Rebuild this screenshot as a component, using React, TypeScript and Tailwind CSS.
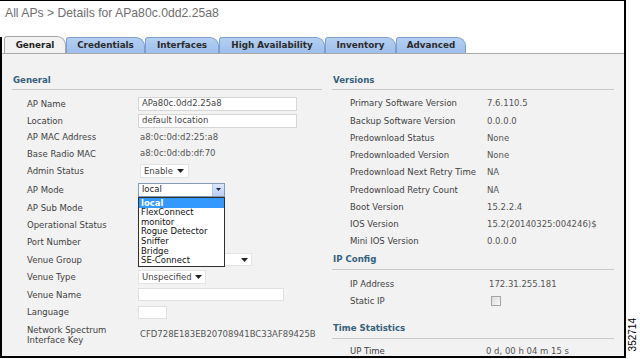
import React from 'react';

// AP details page (General tab) with the AP Mode list dropped open

const sans = "font-['DejaVu_Sans',Verdana,sans-serif]";

const tabs = [
  { name: 'Credentials', w: 'w-[79px]' },
  { name: 'Interfaces', w: 'w-[74px]' },
  { name: 'High Availability', w: 'w-[106px]' },
  { name: 'Inventory', w: 'w-[71px]' },
  { name: 'Advanced', w: 'w-[70px]' },
];

const apModes = ['local', 'FlexConnect', 'monitor', 'Rogue Detector', 'Sniffer', 'Bridge', 'SE-Connect'];

const versions = [
  ['Primary Software Version', '7.6.110.5'],
  ['Backup Software Version', '0.0.0.0'],
  ['Predownload Status', 'None'],
  ['Predownloaded Version', 'None'],
  ['Predownload Next Retry Time', 'NA'],
  ['Predownload Retry Count', 'NA'],
  ['Boot Version', '15.2.2.4'],
  ['IOS Version', '15.2(20140325:004246)$'],
  ['Mini IOS Version', '0.0.0.0'],
];

function Caret() {
  return (
    <svg width="7" height="4" viewBox="0 0 7 4" className="shrink-0">
      <path d="M0 0h7L3.5 4z" fill="#222" />
    </svg>
  );
}

function SectionHeader({ title, h = 'h-[19px]' }: { title: string; h?: string }) {
  return (
    <div className={`flex ${h} items-center border-b border-[#c9c9c9] pl-[1px] text-[8.6px] font-bold text-[#34617d]`}>
      {title}
    </div>
  );
}

interface RowProps {
  label: React.ReactNode;
  h: string;
  children?: React.ReactNode;
}

const LeftRow: React.FC<RowProps> = ({ label, h, children }) => (
  <div className={`flex items-center ${h}`}>
    <div className="w-[111px] shrink-0 leading-[10px] text-[#3f3f3f]">{label}</div>
    {children}
  </div>
);

const RightRow: React.FC<RowProps> = ({ label, h, children }) => (
  <div className={`flex items-center ${h}`}>
    <div className="w-[137px] shrink-0 text-[#3f3f3f]">{label}</div>
    <div className="text-[#555]">{children}</div>
  </div>
);

export default function App() {
  return (
    <div className={`flex h-[359px] w-[640px] overflow-hidden bg-white ${sans} text-[8.5px] leading-none`}>
      <div className="flex h-[358px] w-[626px] shrink-0 flex-col overflow-hidden border-t border-r-2 border-b-2 border-black">
        {/* breadcrumb title */}
        <div className="flex h-[25px] shrink-0 items-center pl-[5px] font-['Liberation_Sans',Arial,sans-serif] text-[12.2px] text-[#6e6e6e]">
          All APs &gt; Details for APa80c.0dd2.25a8
        </div>

        <div className="mt-[11px] flex min-h-0 flex-1 flex-col border-l-2 border-black">
          {/* tab strip */}
          <div className="flex h-[17px] shrink-0 items-end border-b border-[#a9a9a9] pl-[2px]">
            <div className="flex h-[17px] w-[62px] items-center justify-center rounded-tl-[3px] rounded-tr-[9px] border border-b-0 border-[#a5a5a5] bg-[#f2f2f2] text-[8.8px] font-bold text-[#222]">
              General
            </div>
            {tabs.map((t) => (
              <div
                key={t.name}
                className={`flex h-[16px] ${t.w} items-center justify-center rounded-tl-[3px] rounded-tr-[9px] border border-b-0 border-[#7d9fc9] bg-gradient-to-b from-[#b3cff2] to-[#9fc0eb] text-[8.8px] font-bold text-[#2b2b2b]`}
              >
                {t.name}
              </div>
            ))}
          </div>

          {/* panel */}
          <div className="flex min-h-0 flex-1 gap-[10px] overflow-hidden bg-[#f2f2f2] pl-[10px] pt-[17px]">
            {/* left column */}
            <div className="w-[310px] shrink-0">
              <SectionHeader title="General" />
              <div className="mt-[5px] pl-[15px]">
                <LeftRow label="AP Name" h="h-[17px]">
                  <div className="flex h-[14px] w-[159px] items-center border border-[#d6d6d6] bg-white pl-[3px] text-[#444]">
                    APa80c.0dd2.25a8
                  </div>
                </LeftRow>
                <LeftRow label="Location" h="h-[17px]">
                  <div className="flex h-[14px] w-[159px] items-center border border-[#d6d6d6] bg-white pl-[3px] text-[#444]">
                    default location
                  </div>
                </LeftRow>
                <LeftRow label="AP MAC Address" h="h-[16px]">
                  <span className="pl-[2px] text-[#555]">a8:0c:0d:d2:25:a8</span>
                </LeftRow>
                <LeftRow label="Base Radio MAC" h="h-[17px]">
                  <span className="pl-[2px] text-[#555]">a8:0c:0d:db:df:70</span>
                </LeftRow>
                <LeftRow label="Admin Status" h="h-[18px]">
                  <div className="ml-[2px] flex h-[14px] w-[49px] items-center justify-between border border-[#e4e4e4] bg-white pl-[3px] pr-[4px] text-[#444]">
                    Enable
                    <Caret />
                  </div>
                </LeftRow>
                <LeftRow label="AP Mode" h="h-[19px]">
                  <div className="relative z-10">
                    <div className="flex h-[14px] w-[87px] items-center justify-between border border-[#7f9db9] bg-white pl-[3px] text-[#222]">
                      local
                      <div className="flex h-[12px] w-[12px] items-center justify-center border-l border-[#b4c8ea] bg-gradient-to-b from-[#dbe6fb] to-[#bccff3]">
                        <svg width="5" height="3" viewBox="0 0 5 3">
                          <path d="M0 0h5L2.5 3z" fill="#1d2a4a" />
                        </svg>
                      </div>
                    </div>
                    <div className="absolute left-0 top-full w-[87px] border border-[#2f2f2f] bg-white py-[0.5px] text-[8.5px] text-[#111]">
                      {apModes.map((m, i) => (
                        <div
                          key={m}
                          className={`flex h-[9.6px] items-center pl-[2px] ${i === 0 ? 'bg-[#3399ff] font-bold text-white' : ''}`}
                        >
                          {m}
                        </div>
                      ))}
                    </div>
                  </div>
                </LeftRow>
                <LeftRow label="AP Sub Mode" h="h-[17px]" />
                <LeftRow label="Operational Status" h="h-[17px]" />
                <LeftRow label="Port Number" h="h-[18px]" />
                <LeftRow label="Venue Group" h="h-[17px]">
                  <div className="flex h-[13px] w-[114px] items-center justify-end border border-[#e4e4e4] bg-white pr-[3px]">
                    <Caret />
                  </div>
                </LeftRow>
                <LeftRow label="Venue Type" h="h-[18px]">
                  <div className="flex h-[14px] w-[68px] items-center justify-between border border-[#e4e4e4] bg-white pl-[3px] pr-[3px] text-[#444]">
                    Unspecified
                    <Caret />
                  </div>
                </LeftRow>
                <LeftRow label="Venue Name" h="h-[17px]">
                  <div className="h-[13px] w-[146px] border border-[#e0e0e0] bg-white" />
                </LeftRow>
                <LeftRow label="Language" h="h-[18px]">
                  <div className="h-[13px] w-[29px] border border-[#e0e0e0] bg-white" />
                </LeftRow>
                <LeftRow
                  label={
                    <>
                      Network Spectrum
                      <br />
                      Interface Key
                    </>
                  }
                  h="h-[27px]"
                >
                  <span className="pl-[2px] text-[#555]">CFD728E183EB20708941BC33AF89425B</span>
                </LeftRow>
              </div>
            </div>

            {/* right column */}
            <div className="w-[282px] shrink-0">
              <SectionHeader title="Versions" />
              <div className="mt-[5px] pl-[18px]">
                {versions.map(([l, v]) => (
                  <RightRow key={l} label={l} h="h-[17.25px]">
                    {v}
                  </RightRow>
                ))}
              </div>

              <SectionHeader title="IP Config" h="h-[20px]" />
              <div className="mt-[5px] pl-[18px]">
                <div className="flex h-[17px] items-center">
                  <div className="w-[139px] shrink-0 text-[#3f3f3f]">IP Address</div>
                  <div className="text-[#555]">172.31.255.181</div>
                </div>
                <div className="flex h-[17px] items-center">
                  <div className="w-[141px] shrink-0 text-[#3f3f3f]">Static IP</div>
                  <div className="h-[10px] w-[10px] border border-[#a3a3a3] bg-gradient-to-br from-[#dcdcdc] to-[#f8f8f8]" />
                </div>
              </div>

              <div className="mt-[10px]">
                <SectionHeader title="Time Statistics" h="h-[20px]" />
              </div>
              <div className="mt-[3px] pl-[18px]">
                <div className="flex h-[17px] items-center">
                  <div className="w-[136px] shrink-0 text-[#3f3f3f]">UP Time</div>
                  <div className="text-[#555]">0 d, 00 h 04 m 15 s</div>
                </div>
              </div>
            </div>
          </div>
        </div>
      </div>

      {/* figure number */}
      <div className="flex flex-1 flex-col items-center justify-end pb-[8px]">
        <span className="rotate-180 font-['Liberation_Sans',Arial,sans-serif] text-[10px] text-black [writing-mode:vertical-rl]">
          352714
        </span>
      </div>
    </div>
  );
}
